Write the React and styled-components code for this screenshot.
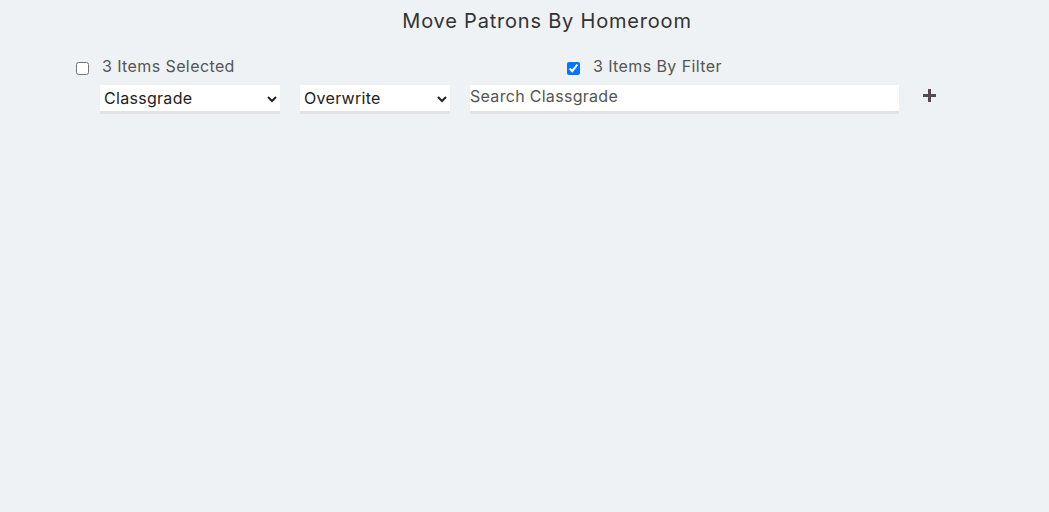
import React from "react";
import styled, { createGlobalStyle } from "styled-components";

const GlobalStyle = createGlobalStyle`
  body {
    margin: 0;
    background: #eff2f5;
    font-family: Inter, "Open Sans", sans-serif;
    color: #555;
  }
`;

const Page = styled.div`
  min-height: 512px;
  padding: 0 31px 0 76px;
  box-sizing: border-box;
`;

const Title = styled.h1`
  margin: 0;
  padding-top: 8px;
  font-size: 20px;
  font-weight: 400;
  line-height: 26px;
  letter-spacing: 0.8px;
  color: #333;
  text-align: center;
`;

const CheckRow = styled.div`
  display: grid;
  grid-template-columns: 491px 1fr;
  margin-top: 21px;
`;

const CheckLabel = styled.label`
  display: flex;
  align-items: center;
  gap: 13px;
  font-size: 16px;
  line-height: 22px;
  letter-spacing: 0.4px;
  color: #555;

  input {
    margin: 4px 0 0 0;
    width: 13px;
    height: 13px;
  }
`;

const Controls = styled.div`
  display: flex;
  align-items: flex-start;
  gap: 20px;
  margin: 0 0 0 24px;
  padding-top: 8px;
`;

const Select = styled.select`
  width: ${({ w }) => w}px;
  height: 29px;
  padding: 0;
  border: none;
  border-bottom: 3px solid #e3e3e3;
  background: #fff;
  font-family: inherit;
  font-size: 16px;
  letter-spacing: 0.3px;
  color: #222;
  outline: none;
  box-sizing: border-box;
`;

const Search = styled.input`
  width: 429px;
  height: 29px;
  padding: 0 0 5px 0;
  border: none;
  border-bottom: 3px solid #e3e3e3;
  background: #fff;
  font-family: inherit;
  font-size: 16px;
  letter-spacing: 0.3px;
  color: #222;
  outline: none;
  box-sizing: border-box;

  &::placeholder {
    color: #555;
  }
`;

const AddButton = styled.button`
  margin: 2px 0 0 0;
  padding: 2px 4px;
  border: none;
  background: none;
  cursor: pointer;
  display: flex;
`;

export default function App() {
  return (
    <>
      <GlobalStyle />
      <Page>
        <Title>Move Patrons By Homeroom</Title>
        <CheckRow>
          <CheckLabel>
            <input type="checkbox" />
            3 Items Selected
          </CheckLabel>
          <CheckLabel>
            <input type="checkbox" defaultChecked />
            3 Items By Filter
          </CheckLabel>
        </CheckRow>
        <Controls>
          <Select w={180} defaultValue="Classgrade">
            <option>Classgrade</option>
          </Select>
          <Select w={150} defaultValue="Overwrite">
            <option>Overwrite</option>
          </Select>
          <Search placeholder="Search Classgrade" />
          <AddButton aria-label="add">
            <svg width="13" height="13" viewBox="0 0 13 13">
              <path d="M5 0h3v5h5v3H8v5H5V8H0V5h5z" fill="#5a4851" />
            </svg>
          </AddButton>
        </Controls>
      </Page>
    </>
  );
}
